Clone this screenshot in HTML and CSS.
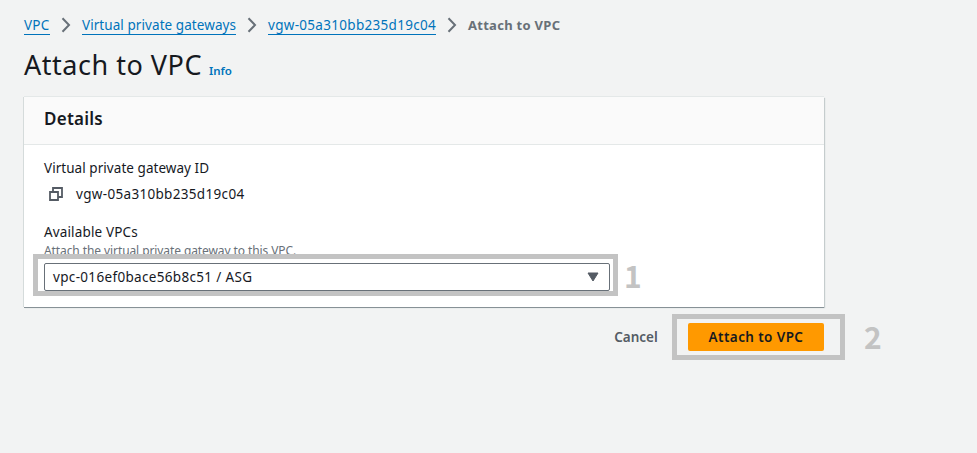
FILE: index.html
```html
<!DOCTYPE html>
<html lang="en">
<head>
<meta charset="utf-8">
<title>Attach to VPC</title>
<link rel="stylesheet" href="styles.css">
</head>
<body>
<main class="page">
  <nav class="breadcrumbs">
    <a class="crumb crumb-root" href="#">VPC</a>
    <svg class="chevron" viewBox="0 0 10 16"><path d="M1.5 1.3 8 8l-6.500 6.700"/></svg>
    <a class="crumb crumb-list" href="#">Virtual private gateways</a>
    <svg class="chevron" viewBox="0 0 10 16"><path d="M1.5 1.3 8 8l-6.500 6.700"/></svg>
    <a class="crumb crumb-id" href="#">vgw-05a310bb235d19c04</a>
    <svg class="chevron" viewBox="0 0 10 16"><path d="M1.5 1.3 8 8l-6.500 6.700"/></svg>
    <span class="current">Attach to VPC</span>
  </nav>
  <header class="heading">
    <h1>Attach to VPC</h1>
    <a class="info" href="#">Info</a>
  </header>
  <section class="card">
    <h2>Details</h2>
    <div class="card-body">
      <div class="label label-id">Virtual private gateway ID</div>
      <div class="copy-row">
        <svg class="copy" viewBox="0 0 14 14"><path d="M1 5h8v8H1zM4 5V1h9v9H9"/></svg>
        <span class="gateway">vgw-05a310bb235d19c04</span>
      </div>
      <div class="label label-vpcs">Available VPCs</div>
      <div class="hint">Attach the virtual private gateway to this VPC.</div>
      <div class="select">
        <span class="value">vpc-016ef0bace56b8c51 / ASG</span>
        <svg class="caret" viewBox="0 0 12 10"><path d="M1 1h10L6 9z"/></svg>
        <div class="callout callout-select"></div>
        <span class="step step-one">1</span>
      </div>
    </div>
  </section>
  <footer class="actions">
    <button class="cancel">Cancel</button>
    <div class="submit-wrap">
      <button class="submit">Attach to VPC</button>
      <div class="callout callout-submit"></div>
      <span class="step step-two">2</span>
    </div>
  </footer>
</main>
</body>
</html>
```
FILE: styles.css
```css
* { box-sizing: border-box; }
body {
  margin: 0;
  height: 453px;
  overflow: hidden;
  background: #f2f3f3;
  color: #16191f;
  font: 13.5px/20px "Noto Sans", "Open Sans", sans-serif;
}
.page { width: 800px; margin-left: 24px; padding-top: 15px; }
a { color: #0073bb; text-decoration: none; }
.breadcrumbs { display: flex; height: 20px; white-space: nowrap; }
.crumb { height: 20px; border-bottom: 1px solid #0073bb; font-size: 13.5px; }
.crumb-root { width: 26px; letter-spacing: .2px; }
.crumb-list { width: 154px; letter-spacing: .07px; }
.crumb-id { width: 168px; letter-spacing: .3px; }
.chevron { width: 10px; height: 16px; margin: 2px 11px; fill: none; stroke: #687078; stroke-width: 2; }
.current { color: #687078; font-size: 13px; font-weight: 700; letter-spacing: .28px; }
.heading { display: flex; height: 62px; align-items: flex-start; white-space: nowrap; }
h1 { margin: 12px 0 0; width: 185px; font-size: 27px; line-height: 36px; font-weight: 400; letter-spacing: .52px; }
.info { margin-top: 26px; font-size: 11.5px; font-weight: 600; }
.card {
  height: 210px;
  background: #fff;
  box-shadow: 0 1px 0 0 #879196, 1px 1px 1px 0 #c5cccd, -1px 0 0 0 #d5dbdb, 0 -1px 0 0 #e4e8e8;
}
h2 {
  margin: 0;
  height: 48px;
  padding: 0 20px;
  border-bottom: 1px solid #e4e8e8;
  background: #fafafa;
  font-size: 17px;
  line-height: 44px;
  font-weight: 600;
  letter-spacing: .25px;
}
.card-body { padding: 13px 20px 0; white-space: nowrap; }
.label { height: 20px; font-size: 13.5px; letter-spacing: .05px; }
.copy-row { display: flex; height: 20px; margin-top: 6px; padding-left: 5px; }
.copy { width: 14px; height: 14px; margin: 3px 13px 0 0; fill: none; stroke: #545b64; stroke-width: 1.8; }
.gateway { letter-spacing: .32px; }
.label-vpcs { margin-top: 18px; letter-spacing: .14px; }
.hint { height: 16px; margin-top: 1px; color: #687078; font-size: 12px; line-height: 16px; letter-spacing: -.09px; }
.select {
  position: relative;
  display: flex;
  width: 566px;
  height: 28px;
  margin-top: 4px;
  padding: 0 10px 0 8px;
  align-items: center;
  justify-content: space-between;
  border: 1px solid #687078;
  border-radius: 2px;
}
.value { letter-spacing: .33px; }
.caret { width: 12px; height: 10px; fill: #545b64; stroke: #545b64; }
.callout { position: absolute; border: 5px solid #c3c3c3; }
.callout-select { left: -12px; top: -10px; width: 585px; height: 42px; }
.step { position: absolute; color: #c3c3c3; font: 700 30px/36px "Noto Sans CJK SC", sans-serif; }
.step-one { left: 579px; top: -7px; }
.actions { display: flex; height: 28px; margin-top: 16px; justify-content: flex-end; align-items: center; }
button { border: 0; padding: 0; background: none; font: 600 13.5px/20px "Noto Sans", sans-serif; white-space: nowrap; }
.cancel { width: 44px; margin-right: 30px; color: #545b64; }
.submit-wrap { position: relative; width: 136px; height: 28px; }
.submit { width: 136px; height: 28px; border-radius: 2px; background: #f90; color: #16191f; letter-spacing: .4px; }
.callout-submit { left: -16px; top: -9px; width: 173px; height: 46px; }
.step-two { left: 176px; top: -5px; }
```
